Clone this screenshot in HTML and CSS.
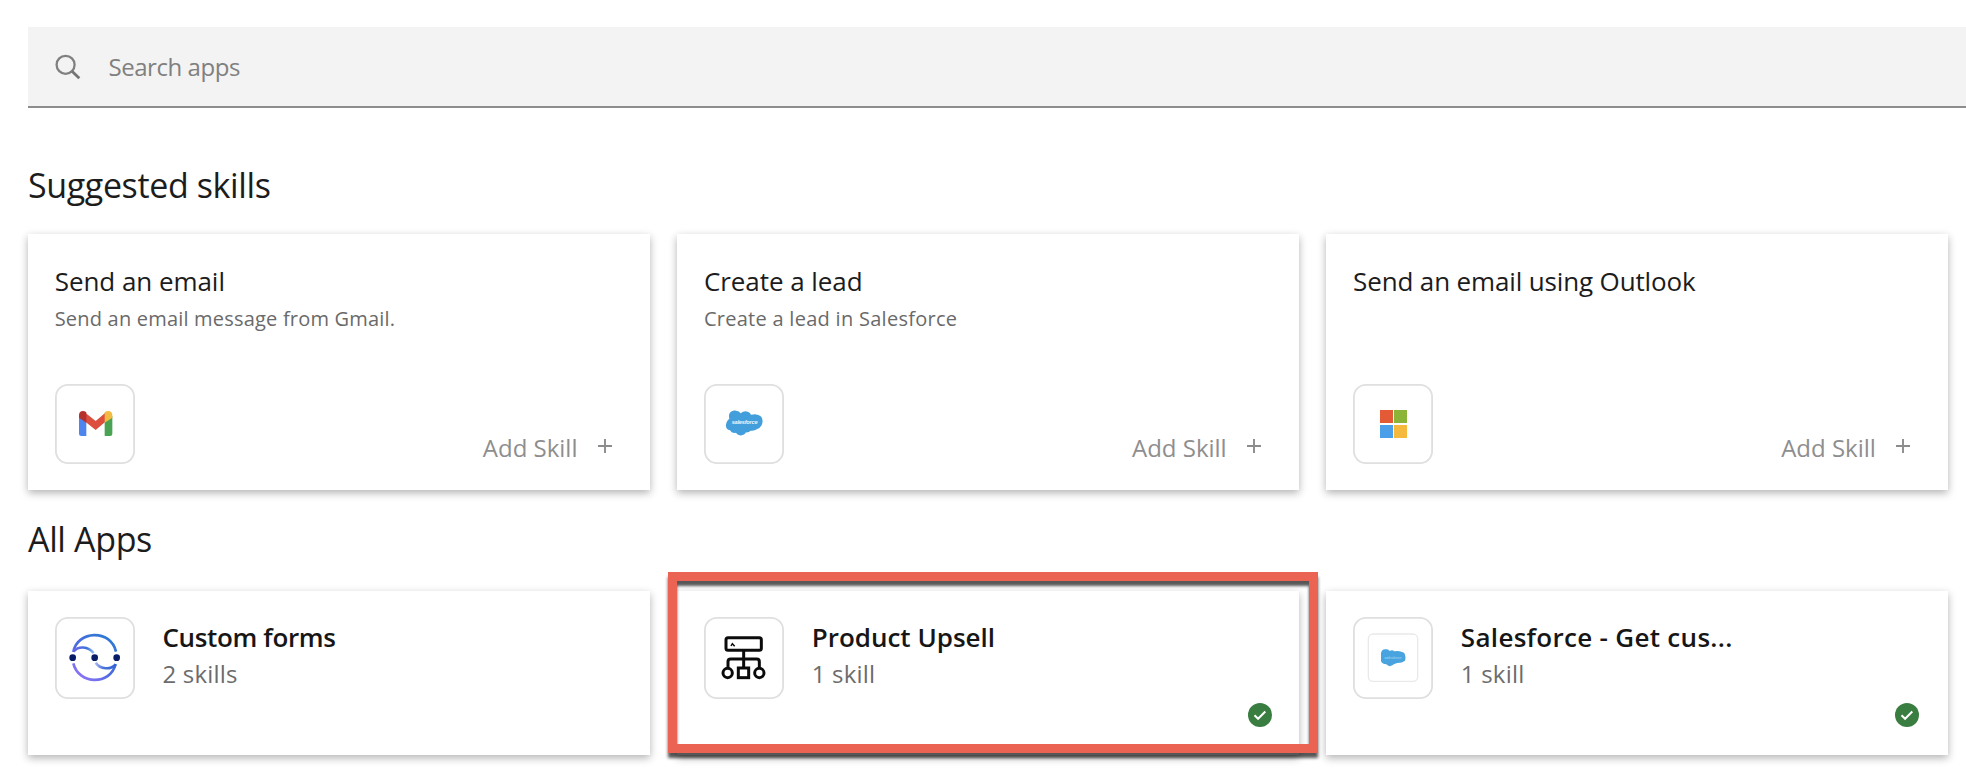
FILE: index.html
```
<!DOCTYPE html>
<html lang="en">
<head>
<meta charset="utf-8">
<title>Apps and skills</title>
<link rel="stylesheet" href="styles.css">
</head>
<body>
<main class="page">
  <div class="search">
    <svg class="search-icon" viewBox="0 0 26 26"><circle cx="10.6" cy="10.8" r="9" fill="none" stroke="#808080" stroke-width="2.3"/><path d="M17 17.2l7.3 7" stroke="#747474" stroke-width="2.8"/></svg>
    <span class="search-text">Search apps</span>
  </div>

  <h2 class="heading heading-skills">Suggested skills</h2>
  <section class="grid skills">
    <article class="card skill">
      <h3 class="skill-title">Send an email</h3>
      <p class="skill-desc desc-gmail">Send an email message from Gmail.</p>
      <div class="skill-foot">
        <svg class="tile" viewBox="45 42 240 240">
          <path d="M117 138h22v60h-15q-7 0-7-7z" fill="#4e84ee"/>
          <path d="M194 138h23v53q0 7-7 7h-16z" fill="#4aa353"/>
          <path d="M134 127l33 26 31-26v27l-31 26-33-26z" fill="#dc4f3f"/>
          <path d="M139 158l-22-15v-8c0-11 12-16 22-8z" fill="#b5312b"/>
          <path d="M194 158l23-15v-8c0-11-13-16-23-8z" fill="#f3bb41"/>
        </svg>
        <span class="add">Add Skill<svg class="plus" viewBox="0 0 14 14"><path d="M7 0v14M0 7h14" stroke="#8c8c8c" stroke-width="1.9"/></svg></span>
      </div>
    </article>
    <article class="card skill">
      <h3 class="skill-title">Create a lead</h3>
      <p class="skill-desc desc-lead">Create a lead in Salesforce</p>
      <div class="skill-foot">
        <svg class="tile" viewBox="43 42 240 240">
          <path d="M119 146C114 129 127 120 139 122Q149 123 153 130Q163 121 174 125Q181 127 184 134Q204 129 215 140C224 155 215 174 203 177Q193 184 183 182Q177 188 169 187C164 199 146 199 139 188Q126 191 121 181C106 180 104 159 119 146Z" fill="#429fdc"/>
          <text class="cloud-text" x="126" y="163" textLength="78">salesforce</text>
        </svg>
        <span class="add">Add Skill<svg class="plus" viewBox="0 0 14 14"><path d="M7 0v14M0 7h14" stroke="#8c8c8c" stroke-width="1.9"/></svg></span>
      </div>
    </article>
    <article class="card skill">
      <h3 class="skill-title title-outlook">Send an email using Outlook</h3>
      <div class="skill-foot">
        <svg class="tile" viewBox="0 0 80 80">
          <path d="M27 26h13v13H27z" fill="#e25b36"/><path d="M41 26h13v13H41z" fill="#8cb537"/>
          <path d="M27 41h13v13H27z" fill="#4a9fe8"/><path d="M41 41h13v13H41z" fill="#f5b93e"/>
        </svg>
        <span class="add">Add Skill<svg class="plus" viewBox="0 0 14 14"><path d="M7 0v14M0 7h14" stroke="#8c8c8c" stroke-width="1.9"/></svg></span>
      </div>
    </article>
  </section>

  <h2 class="heading heading-apps">All Apps</h2>
  <section class="grid">
    <article class="card app">
      <svg class="tile tile-app" viewBox="165 351 240 246">
        <defs><linearGradient id="ring" gradientUnits="userSpaceOnUse" x1="330" y1="415" x2="235" y2="530"><stop offset="0" stop-color="#2f79d3"/><stop offset=".55" stop-color="#4b6be0"/><stop offset="1" stop-color="#8d74f5"/></linearGradient>
        <linearGradient id="fade" gradientUnits="userSpaceOnUse" x1="225" y1="0" x2="284" y2="0"><stop offset="0" stop-color="#6767e5"/><stop offset=".6" stop-color="#3f72db"/><stop offset="1" stop-color="#9dc2f2"/></linearGradient>
        <linearGradient id="fade2" gradientUnits="userSpaceOnUse" x1="284" y1="0" x2="348" y2="0"><stop offset="0" stop-color="#b2bff2"/><stop offset=".4" stop-color="#4774db"/><stop offset="1" stop-color="#3262d4"/></linearGradient></defs>
        <g fill="none" stroke-width="8">
          <path d="M220 456C231 392 332 385 348 455M220 490C236 555 331 557 347 492" stroke="url(#ring)"/>
          <path d="M221 454C235 438 264 438 281 459" stroke="url(#fade)"/>
          <path d="M287 488C301 509 333 510 347 493" stroke="url(#fade2)"/>
        </g>
        <g fill="#081b66"><circle cx="218" cy="473" r="10"/><circle cx="284" cy="473" r="10"/><circle cx="350" cy="473" r="10"/></g>
      </svg>
      <div class="app-body"><h3 class="app-title title-forms">Custom forms</h3><p class="app-count">2 skills</p></div>
    </article>
    <article class="card app">
      <svg class="tile tile-app" viewBox="163 201 240 246">
        <g fill="none" stroke="#0b0b0b" stroke-width="9">
          <rect x="229" y="263" width="106" height="38" rx="6"/>
          <path d="M282 301v51M235 354v-19q0-8 8-8h78q8 0 8 8v19"/>
          <rect x="266" y="354" width="31" height="29"/>
          <circle cx="234" cy="369" r="14"/><circle cx="329" cy="369" r="14"/>
          <path d="M244 288l4-7 7 8" stroke-width="4.5"/>
        </g>
      </svg>
      <div class="app-body"><h3 class="app-title title-upsell">Product Upsell</h3><p class="app-count">1 skill</p></div>
      <svg class="check" viewBox="0 0 24 24"><circle cx="12" cy="12" r="12" fill="#3a7d40"/><path d="M6.5 12.2l3.6 3.6 7.2-7.3" fill="none" stroke="#fff" stroke-width="2"/></svg>
      <div class="highlight"></div>
    </article>
    <article class="card app">
      <svg class="tile tile-app" viewBox="40 51 240 246">
        <rect x="86" y="102" width="148" height="142" rx="14" fill="none" stroke="#e9e9e9" stroke-width="4"/>
        <path d="M124 160Q126 145 141 148Q147 149 150 153Q158 148 164 154Q178 150 193 158Q200 168 196 182Q188 189 173 189Q162 192 158 196Q148 202 140 193Q126 192 124 183Z" fill="#48a3de"/>
        <text class="cloud-text cloud-text-small" x="134" y="178" textLength="52">salesforce</text>
      </svg>
      <div class="app-body"><h3 class="app-title title-sales">Salesforce - Get cus...</h3><p class="app-count">1 skill</p></div>
      <svg class="check check-last" viewBox="0 0 24 24"><circle cx="12" cy="12" r="12" fill="#3a7d40"/><path d="M6.5 12.2l3.6 3.6 7.2-7.3" fill="none" stroke="#fff" stroke-width="2"/></svg>
    </article>
  </section>
</main>
</body>
</html>
```

FILE: styles.css
```
* { box-sizing: border-box; }
body { margin: 0; background: #fff; color: #1c1c1c; font-family: "Open Sans", "Liberation Sans", sans-serif; }
h2, h3, p { margin: 0; font-weight: 400; white-space: nowrap; }
.page { min-height: 774px; padding: 27px 0 0 28px; }
.search { display: flex; align-items: center; height: 80.5px; padding: 1px 0 0 27px; background: #f3f3f3; border-bottom: 2px solid #8d8d8d; }
.search-icon { width: 26px; height: 26px; }
.search-text { margin-left: 27.5px; font-size: 24px; letter-spacing: -0.45px; color: #808080; }
.heading { font-size: 34px; line-height: 40px; }
.heading-skills { margin: 57px 0 29.5px; letter-spacing: -0.38px; }
.heading-apps { margin: 28.5px 0 32px; letter-spacing: -0.36px; }
.grid { display: grid; grid-template-columns: repeat(3, 622px); gap: 27.2px; }
.card { background: #fff; box-shadow: 0 3px 8px rgba(0, 0, 0, .3); }
.skill { display: flex; flex-direction: column; height: 256px; padding: 31px 38px 26px 26.7px; }
.skill-title { font-size: 26px; line-height: 32px; letter-spacing: -0.05px; }
.title-outlook { letter-spacing: -0.14px; }
.skill-desc { margin-top: 9px; font-size: 20px; line-height: 26px; color: #6a6a6a; }
.desc-gmail { letter-spacing: 0.2px; }
.desc-lead { letter-spacing: 0.28px; }
.skill-foot { display: flex; justify-content: space-between; align-items: flex-end; margin-top: auto; }
.tile { flex: none; width: 80px; height: 80px; border-radius: 13px; box-shadow: inset 0 0 0 1.8px #dfdfdf; }
.tile-app { height: 82px; }
.add { display: flex; align-items: center; gap: 20.5px; padding-bottom: 1px; font-size: 24px; line-height: 30px; color: #8e8e8e; }
.plus { width: 14px; height: 14px; margin-bottom: 5px; }
.cloud-text { font: italic 700 17px "Liberation Sans", sans-serif; fill: #e8f5fd; }
.cloud-text-small { font-size: 12px; fill: #8cc9ee; }
.app { position: relative; display: flex; height: 164.5px; padding: 26.5px 27px 28.5px 26.7px; }
.app-body { flex: 1; margin: 4px 0 0 27.8px; }
.app-title { font-size: 26px; line-height: 32px; font-weight: 600; color: #161616; }
.title-forms { letter-spacing: -0.36px; }
.title-sales { letter-spacing: 0.3px; }
.app-count { margin-top: 6px; font-size: 24px; line-height: 30px; letter-spacing: 0.2px; color: #6c6c6c; }
.check { align-self: flex-end; width: 24px; height: 24px; }
.check-last { margin-right: 2.5px; }
.highlight { position: absolute; inset: -18.5px -18.5px 2px -9.2px; border: 9.5px solid #eb6453; box-shadow: 0 5px 3px rgba(0, 0, 0, .66), inset 0 5px 3px rgba(0, 0, 0, .66); }
```
